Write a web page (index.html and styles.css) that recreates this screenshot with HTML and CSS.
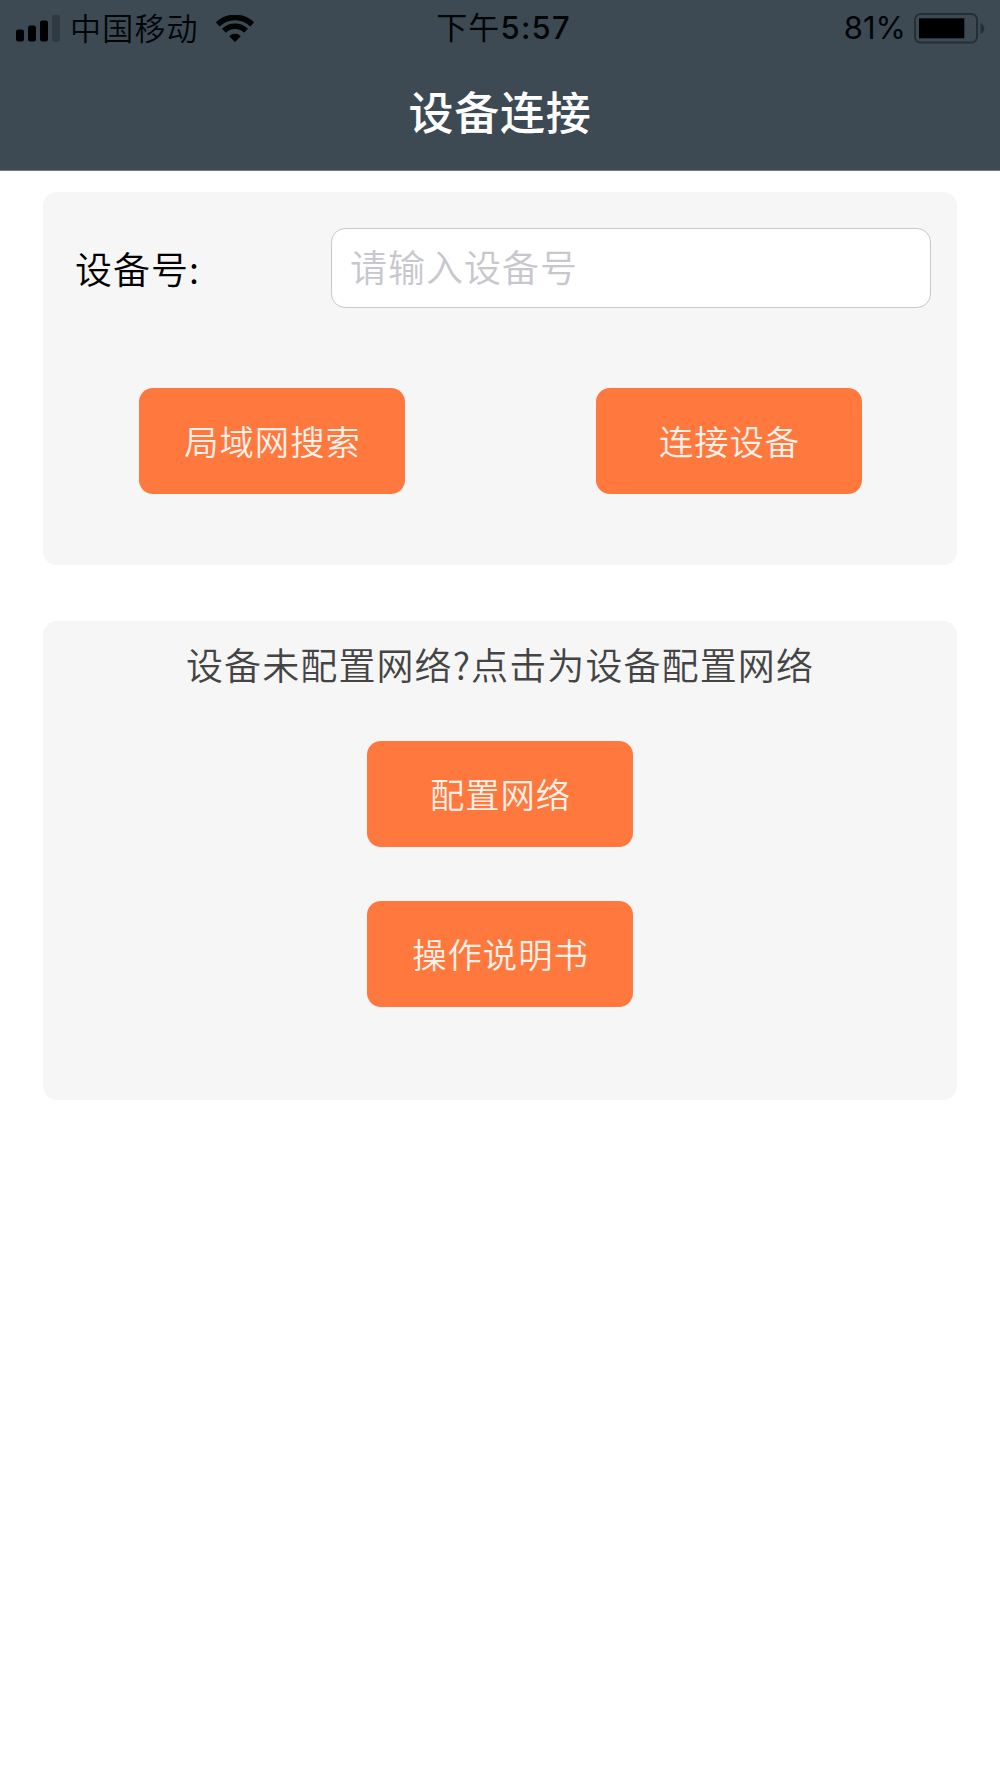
FILE: index.html
```html
<!DOCTYPE html>
<html lang="zh-CN">
<head>
    <meta charset="UTF-8">
    <meta name="viewport" content="width=device-width, initial-scale=1.0">
    <title>设备连接</title>
    <link rel="stylesheet" href="styles.css">
</head>
<body>
    <header class="header">
        <div class="status-bar">
            <div class="status-left">
                <svg class="signal" width="44" height="27" viewBox="0 0 44 27">
                    <rect x="0" y="14.5" width="8" height="12" rx="2.2"/>
                    <rect x="12" y="10.5" width="8" height="16" rx="2.2"/>
                    <rect x="24" y="5.5" width="8" height="21" rx="2.2"/>
                    <rect class="dim" x="36" y="0" width="8" height="26.5" rx="2.2"/>
                </svg>
                <span class="carrier">中国移动</span>
                <svg class="wifi" width="38" height="27" viewBox="0 0 38 27">
                    <path class="arc" d="M1.8 9.4 A24.5 24.5 0 0 1 36.2 9.4"/>
                    <path class="arc" d="M8 15.8 A15.5 15.5 0 0 1 30 15.8"/>
                    <path d="M19 27 L13.2 21.2 A8.2 8.2 0 0 1 24.8 21.2 Z"/>
                </svg>
            </div>
            <div class="time">下午<span class="digits">5:57</span></div>
            <div class="status-right">
                <span class="percent">81%</span>
                <svg class="battery" width="71" height="31" viewBox="0 0 71 31">
                    <rect class="shell" x="1" y="1" width="62" height="28.6" rx="5.5"/>
                    <rect x="5" y="5.3" width="45.3" height="20"/>
                    <path class="cap" d="M66.5 10 Q70.3 12 70.3 15.5 Q70.3 19 66.5 21 Z"/>
                </svg>
            </div>
        </div>
        <h1 class="title">设备连接</h1>
    </header>

    <main class="content">
        <section class="card connect">
            <div class="field">
                <label for="device">设备号:</label>
                <input type="text" id="device" placeholder="请输入设备号">
            </div>
            <div class="buttons">
                <button class="btn">局域网搜索</button>
                <button class="btn">连接设备</button>
            </div>
        </section>

        <section class="card network">
            <p class="tip">设备未配置网络?点击为设备配置网络</p>
            <button class="btn">配置网络</button>
            <button class="btn">操作说明书</button>
        </section>
    </main>
</body>
</html>
```
FILE: styles.css
```css
* {
    box-sizing: border-box;
}
body {
    margin: 0;
    background-color: #fff;
    font-family: "Noto Sans CJK SC", sans-serif;
    font-weight: 350;
}
.header {
    height: 171px;
    background-color: #3d4a54;
    border-bottom: 1px solid #747c83;
}
.status-bar {
    display: grid;
    grid-template-columns: 1fr auto 1fr;
    height: 54px;
    padding: 0 15px 0 16px;
    align-items: center;
    color: #020406;
    font-size: 31px;
    line-height: 54px;
}
.status-left, .status-right {
    display: flex;
    align-items: center;
}
.status-right {
    justify-content: flex-end;
    gap: 8px;
}
.carrier {
    margin-left: 10px;
    padding-bottom: 2px;
    line-height: 52px;
    letter-spacing: 1.2px;
}
.wifi {
    margin-left: 17px;
}
.arc {
    fill: none;
    stroke: #020406;
    stroke-width: 5.6;
}
.dim {
    opacity: 0.22;
}
.time {
    padding: 0 0 2px 6px;
    font-weight: 400;
    line-height: 52px;
    letter-spacing: 1.2px;
}
.digits {
    font-family: Inter, sans-serif;
    font-weight: 500;
}
.percent {
    font-family: Inter, sans-serif;
    font-weight: 400;
}
.shell {
    fill: none;
    stroke: #252e36;
    stroke-width: 2;
}
.cap {
    fill: #252e36;
}
.title {
    margin: 0;
    padding-top: 25px;
    color: #fff;
    font-size: 45px;
    font-weight: 500;
    line-height: 64px;
    letter-spacing: 0.8px;
    text-align: center;
}
.content {
    padding: 21px 43px;
}
.card {
    background-color: #f6f6f6;
    border-radius: 14px;
}
.connect {
    height: 373px;
    padding: 36px 26px 0 32px;
}
.field {
    display: flex;
    justify-content: space-between;
    align-items: center;
}
label {
    padding-bottom: 1px;
    font-size: 37px;
    letter-spacing: 1px;
}
input {
    width: 600px;
    height: 80px;
    padding: 0 18px 4px;
    border: 1.5px solid #c8c8ca;
    border-radius: 14px;
    background-color: #fff;
    font-family: inherit;
    font-size: 37px;
    font-weight: inherit;
    letter-spacing: 1px;
}
input::placeholder {
    color: #c7c7cd;
}
.buttons {
    display: flex;
    justify-content: space-between;
    padding: 80px 69px 0 64px;
}
.btn {
    width: 266px;
    height: 106px;
    padding: 0 0 3px 1px;
    border: none;
    border-radius: 14px;
    background-color: #ff783e;
    color: #fff0e8;
    font-family: inherit;
    font-size: 34.3px;
    font-weight: inherit;
    letter-spacing: 1px;
}
.network {
    display: flex;
    flex-direction: column;
    align-items: center;
    height: 479px;
    margin-top: 56px;
}
.tip {
    margin: 17px 0 50px;
    color: #444;
    font-size: 37px;
    line-height: 53px;
    letter-spacing: 1.1px;
}
.network .btn + .btn {
    margin-top: 54px;
}
```
